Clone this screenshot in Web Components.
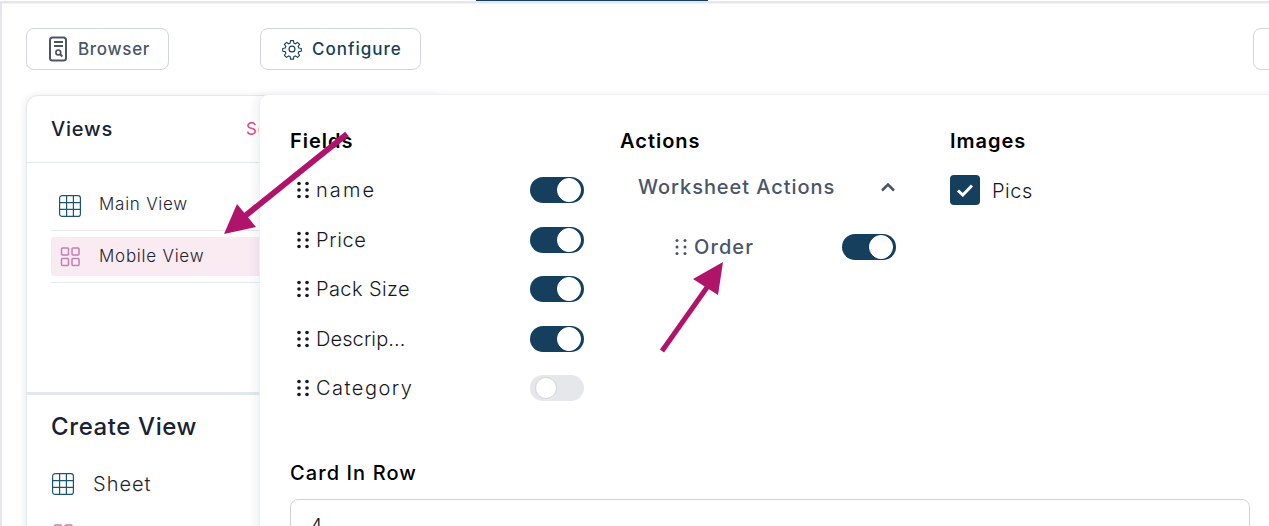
<!DOCTYPE html>
<html>
<head>
<meta charset="utf-8">
<title>Configure view</title>
<style>
  html, body { margin: 0; height: 100%; overflow: hidden; background: #fff; }
  body { font-family: Inter, "Liberation Sans", sans-serif; }
</style>
</head>
<body>
<view-page></view-page>
<script>
function tpl(html) {
  let t = document.createElement("template");
  t.innerHTML = html;
  return t;
}

// base class, every element just clones its template
class Base extends HTMLElement {
  constructor() {
    super();
    this.attachShadow({ mode: "open" });
    this.shadowRoot.append(this.constructor.template.content.cloneNode(true));
  }
}

const ICONS = {
  grid: `<svg width="24" height="24" viewBox="0 0 24 24" fill="none" stroke="#1d5673" stroke-width="1.2"><rect x="1.6" y="1.6" width="20.8" height="20.8" rx="2.5"/><path d="M8.6 1.6v20.8M15.4 1.6v20.8M1.6 8.6h20.8M1.6 15.4h20.8"/></svg>`,
  cards: `<svg width="24" height="24" viewBox="0 0 24 24" fill="none" stroke="#c27fb2" stroke-width="1.5"><rect x="3.5" y="3" width="7" height="7" rx="1"/><rect x="14" y="3" width="7" height="7" rx="1"/><rect x="3.5" y="13.5" width="7" height="7" rx="1"/><rect x="14" y="13.5" width="7" height="7" rx="1"/></svg>`,
  browser: `<svg width="20" height="26" viewBox="0 0 20 26" fill="none" stroke="#4a5568" stroke-width="2"><rect x="2" y="1.5" width="16" height="23" rx="2.5"/><path d="M6 6h9M6 10h9"/><circle cx="10.3" cy="16.4" r="2.4" stroke-width="1.7"/><path d="M12 18.2l2.4 2.3" stroke-width="2"/></svg>`,
  gear: `<svg width="22" height="22" viewBox="0 0 24 24" fill="none" stroke="#153f5c" stroke-width="1.3" stroke-linejoin="round"><circle cx="12" cy="12" r="3.2"/><path d="M10.3 2.3h3.4l.5 2.9 1.8.8 2.4-1.7 2.4 2.4-1.7 2.4.8 1.8 2.9.5v3.2l-2.9.5-.8 1.8 1.7 2.4-2.4 2.4-2.4-1.7-1.8.8-.5 2.9h-3.4l-.5-2.9-1.8-.8-2.4 1.7-2.4-2.4 1.7-2.4-.8-1.8-2.9-.5v-3.2l2.9-.5.8-1.8-1.7-2.4 2.4-2.4 2.4 1.7 1.8-.8z" transform="translate(12 12) scale(.94) translate(-12 -12)"/></svg>`
};

class ToolButton extends Base {
  connectedCallback() {
    this.shadowRoot.querySelector("#icon").innerHTML = ICONS[this.getAttribute("icon")] || "";
  }
}
ToolButton.template = tpl(`
  <style>
    :host {
      display: inline-flex;
      flex: none;
      align-items: center;
      box-sizing: border-box;
      height: 42px;
      border: 1px solid #d1d5de;
      border-radius: 8px;
      background: #fff;
      font-size: 17px;
      font-weight: 500;
      color: #4a5568;
    }
    #icon { display: flex; }
  </style>
  <span id="icon"></span><slot></slot>
`);
customElements.define("tool-button", ToolButton);

class ViewItem extends Base {
  connectedCallback() {
    this.shadowRoot.querySelector("#icon").innerHTML = ICONS[this.getAttribute("icon")];
  }
}
ViewItem.template = tpl(`
  <style>
    :host {
      display: flex;
      align-items: center;
      gap: 17px;
      height: 39px;
      padding-left: 7px;
      border-radius: 3px;
      font-size: 17px;
      font-weight: 300;
      letter-spacing: .75px;
      color: #1f2430;
    }
    :host([active]) { background: #faebf3; }
    :host([lift]) #text { margin-bottom: 2px; }
    :host([drop]) #icon { margin-top: 2px; }
    #icon { display: flex; }
  </style>
  <span id="icon"></span><span id="text"><slot></slot></span>
`);
customElements.define("view-item", ViewItem);

class ViewsPanel extends Base {}
ViewsPanel.template = tpl(`
  <style>
    :host {
      display: block;
      width: 420px;
      height: 470px;
      box-sizing: border-box;
      border: 1px solid #e3e7ee;
      border-radius: 12px;
      background: #fff;
      box-shadow: -2px 0 6px rgba(20,30,60,.07);
      color: #1a2236;
    }
    header {
      display: flex;
      align-items: center;
      gap: 133px;
      box-sizing: border-box;
      height: 67px;
      padding: 0 24px;
      border-bottom: 1px solid #e3e7ee;
      font-size: 20px;
      font-weight: 500;
      letter-spacing: .8px;
    }
    header span { font-size: 17px; font-weight: 400; color: #d94f8a; }
    #list { height: 232px; box-sizing: border-box; padding: 22px 24px 0; border-bottom: 3px solid #e3e7ee; }
    hr { border: 0; border-top: 1px solid #e7e7ef; margin: 0; }
    #list hr + view-item { margin-top: 6px; }
    #list view-item + hr { margin-top: 6px; }
    #create { padding: 17px 24px 0; }
    h2 { margin: 0 0 22px; font-size: 24px; font-weight: 500; line-height: 30px; letter-spacing: .6px; }
    .new { margin: 0 0 11px -7px; gap: 18px; font-size: 20px; letter-spacing: 1px; }
  </style>
  <header>Views<span>Se</span></header>
  <div id="list">
    <view-item icon="grid" lift drop>Main View</view-item>
    <hr>
    <view-item icon="cards" active lift>Mobile View</view-item>
    <hr>
  </div>
  <div id="create">
    <h2>Create View</h2>
    <view-item class="new" icon="grid">Sheet</view-item>
    <view-item class="new" icon="cards">Card</view-item>
  </div>
`);
customElements.define("views-panel", ViewsPanel);

class ToggleSwitch extends Base {}
ToggleSwitch.template = tpl(`
  <style>
    :host {
      display: block;
      flex: none;
      position: relative;
      width: 54px;
      height: 26px;
      border-radius: 13px;
      background: #e5e7eb;
    }
    :host([on]) { background: #153f5c; }
    i {
      position: absolute;
      top: 2px;
      left: 5px;
      width: 20px;
      height: 20px;
      border: 1px solid #d1d5db;
      border-radius: 50%;
      background: #fff;
    }
    :host([on]) i { left: 27px; border-color: #fff; width: 22px; height: 22px; top: 1px; }
  </style>
  <i></i>
`);
customElements.define("toggle-switch", ToggleSwitch);

class DragHandle extends Base {}
DragHandle.template = tpl(`
  <style>
    :host { display: flex; color: #16191f; --dot: 1.8px; }
    :host([soft]) { color: #4a5568; --dot: 1.5px; }
    circle { r: var(--dot); }
  </style>
  <svg width="12" height="18" viewBox="0 0 12 18" fill="currentColor">
    <circle cx="2" cy="2.5"/><circle cx="10" cy="2.5"/>
    <circle cx="2" cy="9"/><circle cx="10" cy="9"/>
    <circle cx="2" cy="15.5"/><circle cx="10" cy="15.5"/>
  </svg>
`);
customElements.define("drag-handle", DragHandle);

class FieldRow extends Base {
  connectedCallback() {
    if (this.hasAttribute("on")) this.shadowRoot.querySelector("toggle-switch").setAttribute("on", "");
    if (this.hasAttribute("soft")) this.shadowRoot.querySelector("drag-handle").setAttribute("soft", "");
  }
}
FieldRow.template = tpl(`
  <style>
    :host {
      display: flex;
      align-items: center;
      height: 26px;
      padding-left: 7px;
      font-size: 20px;
      font-weight: 300;
      color: #16191f;
    }
    :host([soft]) { font-weight: 500; color: #4a5568; letter-spacing: 1.1px; }
    span { flex: 1; margin-left: 7px; }
  </style>
  <drag-handle></drag-handle><span><slot></slot></span><toggle-switch></toggle-switch>
`);
customElements.define("field-row", FieldRow);

class ConfigPopover extends Base {}
ConfigPopover.template = tpl(`
  <style>
    :host {
      display: block;
      position: absolute;
      left: 259px;
      top: 94px;
      right: -20px;
      height: 470px;
      box-sizing: border-box;
      padding: 34px 0 0 30px;
      border: 1px solid #eef0f3;
      border-radius: 10px 0 0 0;
      background: #fff;
      box-shadow: -4px 0 8px rgba(20,30,60,.06);
      color: #000;
    }
    #cols { display: grid; grid-template-columns: 330px 330px 300px; height: 332px; }
    h3 { margin: 0; font-size: 20px; font-weight: 600; line-height: 24px; letter-spacing: 1px; }
    #fields { display: flex; flex-direction: column; gap: 23.5px; width: 294px; margin-top: 24px; }
    #acc {
      display: flex;
      align-items: center;
      justify-content: space-between;
      width: 258px;
      height: 26px;
      margin: 21px 0 0 18px;
      font-size: 20px;
      font-weight: 500;
      letter-spacing: .95px;
      color: #4a5568;
    }
    #sub { width: 221px; margin: 34px 0 0 55px; }
    #sub field-row { padding-left: 0; }
    #pics { display: flex; align-items: center; gap: 12px; margin-top: 22px; font-size: 20px; font-weight: 300; letter-spacing: .5px; color: #16191f; }
    #pics span:last-child { padding-top: 2px; }
    #box { display: flex; align-items: center; justify-content: center; width: 30px; height: 30px; border-radius: 4px; background: #153f5c; }
    label { display: block; font-size: 20px; font-weight: 500; line-height: 24px; letter-spacing: 1.1px; }
    #input {
      box-sizing: border-box;
      width: 960px;
      height: 48px;
      margin-top: 14px;
      padding: 14px 19px;
      border: 1px solid #d1d1dc;
      border-radius: 8px;
      font-size: 20px;
      font-weight: 300;
      color: #16191f;
    }
  </style>
  <div id="cols">
    <div>
      <h3>Fields</h3>
      <div id="fields">
        <field-row on style="letter-spacing:2.1px">name</field-row>
        <field-row on style="letter-spacing:.6px">Price</field-row>
        <field-row on style="letter-spacing:.4px">Pack Size</field-row>
        <field-row on style="letter-spacing:.1px">Descrip...</field-row>
        <field-row style="letter-spacing:1.5px">Category</field-row>
      </div>
    </div>
    <div>
      <h3>Actions</h3>
      <div id="acc">Worksheet Actions
        <svg width="16" height="10" viewBox="0 0 16 10" fill="none" stroke="#4a5568" stroke-width="2.6"><path d="M2 8.5l6-6 6 6"/></svg>
      </div>
      <div id="sub"><field-row on soft>Order</field-row></div>
    </div>
    <div>
      <h3>Images</h3>
      <div id="pics">
        <span id="box"><svg width="18" height="14" viewBox="0 0 18 14" fill="none" stroke="#fff" stroke-width="3"><path d="M2 7.5l4.8 4.5L16 2.5"/></svg></span>
        <span>Pics</span>
      </div>
    </div>
  </div>
  <label>Card In Row</label>
  <div id="input">4</div>
`);
customElements.define("config-popover", ConfigPopover);

class ViewPage extends Base {}
ViewPage.template = tpl(`
  <style>
    :host {
      display: block;
      position: relative;
      height: 526px;
      overflow: hidden;
      box-sizing: border-box;
    }
    #strip { height: 1px; background: #fff; }
    #tab { width: 232px; height: 1px; margin-left: 476px; background: #153f5c; }
    #band { height: 2px; background: #e5e5ee; border-bottom: 1px solid #f1f1f6; margin-bottom: -1px; }
    #body { border-left: 2px solid #e5e5ee; height: 523px; box-sizing: border-box; }
    #bar { display: flex; padding: 25px 0 0 24px; }
    #browser { width: 143px; padding-left: 21px; gap: 10px; box-sizing: border-box; letter-spacing: .7px; }
    #configure { width: 161px; margin-left: 91px; padding-left: 20px; gap: 9px; box-sizing: border-box; color: #153f5c; letter-spacing: 1px; }
    #other { width: 80px; margin-left: 832px; }
    views-panel { margin: 25px 0 0 24px; }
    svg.arrows { position: absolute; left: 0; top: 0; pointer-events: none; }
  </style>
  <div id="strip"><div id="tab"></div></div>
  <div id="band"></div>
  <div id="body">
    <div id="bar">
      <tool-button id="browser" icon="browser">Browser</tool-button>
      <tool-button id="configure" icon="gear">Configure</tool-button>
      <tool-button id="other"></tool-button>
    </div>
    <views-panel></views-panel>
  </div>
  <config-popover></config-popover>
  <svg class="arrows" width="1269" height="526" fill="#b0146a" stroke="#b0146a">
    <path d="M347 134L245 216" stroke-width="6" fill="none"/>
    <path d="M224 234L237 204L256 227Z" stroke="none"/>
    <path d="M662 351L708 286" stroke-width="5" fill="none"/>
    <path d="M723 262L693 279L718 295Z" stroke="none"/>
  </svg>
`);
customElements.define("view-page", ViewPage);
</script>
</body>
</html>
